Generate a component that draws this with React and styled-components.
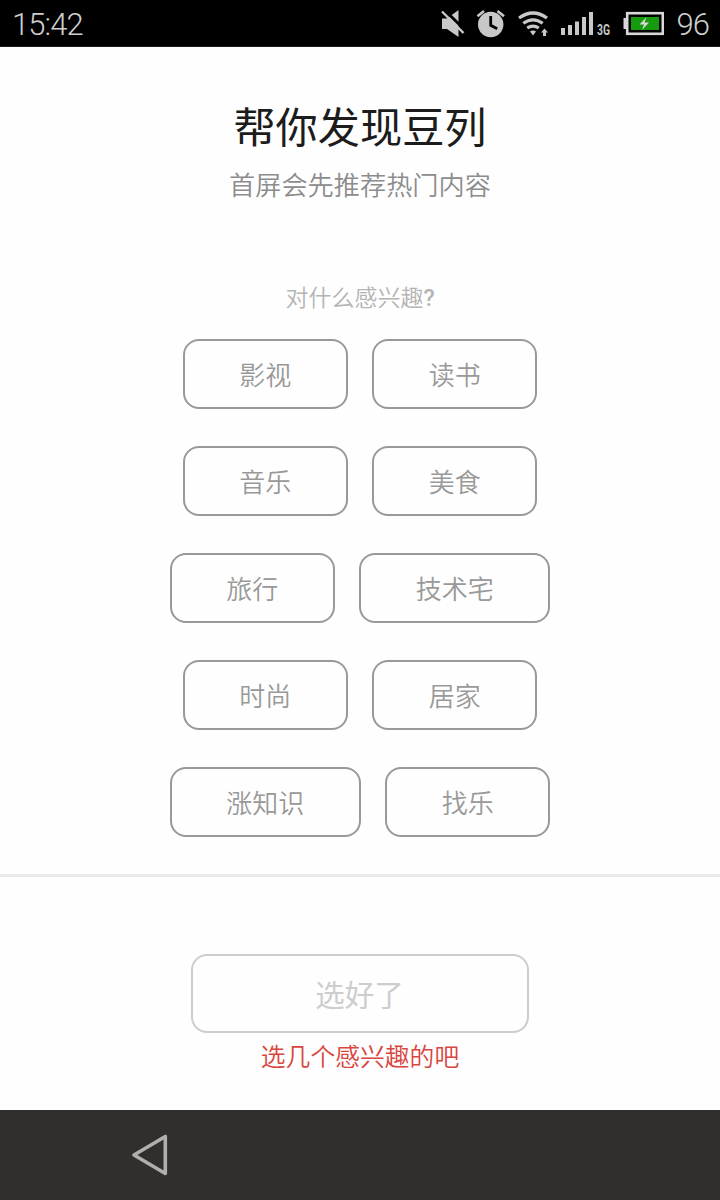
import React, { useState } from "react";
import styled, { createGlobalStyle } from "styled-components";

const GlobalStyle = createGlobalStyle`
  * {
    box-sizing: border-box;
  }

  body {
    margin: 0;
    background-color: #fefefe;
    font-family: Roboto, "Noto Sans CJK SC", sans-serif;
  }
`;

const Screen = styled.div`
  width: 720px;
  height: 1200px;
  display: flex;
  flex-direction: column;
  overflow: hidden;
`;

const StatusBar = styled.header`
  height: 47px;
  flex: none;
  display: flex;
  align-items: center;
  justify-content: space-between;
  padding: 4px 11px 0 12px;
  background-color: #000;
  border-bottom: 1px solid #1c1c1c;
`;

const StatusText = styled.span`
  font-weight: 300;
  font-size: 31px;
  line-height: 42px;
  letter-spacing: ${props => props.$spacing || 0}px;
  color: #cfcfcf;
`;

const StatusRight = styled.div`
  display: flex;
  align-items: center;
`;

const StatusIcons = styled.svg`
  display: block;
  margin: -4px 13px 0 0;
`;

const Main = styled.main`
  height: 827px;
  flex: none;
  display: flex;
  flex-direction: column;
  align-items: center;
  padding-top: 48px;
`;

const Title = styled.h1`
  margin: 0;
  font-family: "Noto Sans CJK SC", sans-serif;
  font-size: 42.2px;
  font-weight: 400;
  line-height: 60px;
  color: #1c1c1c;
`;

const Subtitle = styled.p`
  margin: 10px 0 0;
  font-family: "Noto Sans CJK SC", sans-serif;
  font-size: 26.2px;
  font-weight: 350;
  line-height: 38px;
  color: #8c8c8c;
`;

const Question = styled.p`
  display: flex;
  align-items: baseline;
  height: 34px;
  margin: 76px 0 26px;
  font-size: 23px;
  font-weight: 350;
  line-height: 34px;
  color: #b4b4b4;
`;

const QuestionChars = styled.span`
  font-family: "Noto Sans CJK SC", sans-serif;
`;

const QuestionMark = styled.span`
  font-weight: 500;
`;

const TagList = styled.div`
  display: flex;
  flex-direction: column;
  align-items: center;
  gap: 37px;
`;

const TagRow = styled.div`
  display: flex;
  gap: 24.5px;
`;

const Tag = styled.button`
  height: 70px;
  padding: 0 54.5px 1px;
  border: 2px solid ${props => (props.$selected ? "#42bd56" : "#999")};
  border-radius: 16px;
  background: none;
  font-family: "Noto Sans CJK SC", sans-serif;
  font-size: 26px;
  font-weight: 350;
  color: ${props => (props.$selected ? "#42bd56" : "#999")};
`;

const Footer = styled.footer`
  height: 236px;
  flex: none;
  display: flex;
  flex-direction: column;
  align-items: center;
  padding-top: 77px;
  border-top: 3px solid #e9e9e9;
`;

const SubmitButton = styled.button`
  width: 338px;
  height: 79px;
  padding: 0 1px 2px 0;
  border: 2px solid #cdcdcd;
  border-radius: 16px;
  background: none;
  font-family: "Noto Sans CJK SC", sans-serif;
  font-size: 29.5px;
  font-weight: 400;
  color: #cdcdcd;
`;

const Hint = styled.p`
  margin: 4px 0 0;
  font-family: "Noto Sans CJK SC", sans-serif;
  font-size: 24.8px;
  font-weight: 350;
  line-height: 36px;
  color: #d9453f;
`;

const NavBar = styled.nav`
  height: 90px;
  flex: none;
  display: flex;
  align-items: center;
  padding-left: 130px;
  background-color: #322e2d;
`;

const BackButton = styled.button`
  padding: 0;
  border: 0;
  background: none;
`;

const BackIcon = styled.svg`
  display: block;
`;

const rows = [
  ["影视", "读书"],
  ["音乐", "美食"],
  ["旅行", "技术宅"],
  ["时尚", "居家"],
  ["涨知识", "找乐"]
];

const App = () => {
  const [selected, setSelected] = useState([]);

  const toggle = tag => {
    setSelected(
      selected.includes(tag)
        ? selected.filter(item => item !== tag)
        : [...selected, tag]
    );
  };

  return (
    <Screen>
      <GlobalStyle />
      <StatusBar>
        <StatusText $spacing={-0.9}>15:42</StatusText>
        <StatusRight>
          <StatusIcons width="224" height="46" viewBox="440 0 224 46">
            {/* muted speaker */}
            <path d="M442 18.5h5l11.5-8.5v27l-11.5-8h-5z" fill="#c8c8c8" />
            <path d="M444 9.5L466 31" stroke="#000" strokeWidth="3" />
            <path d="M442 11.5L463.5 33" stroke="#c8c8c8" strokeWidth="2.4" />
            {/* alarm */}
            <circle cx="490.7" cy="24.5" r="12.7" fill="#c8c8c8" />
            <path
              d="M477.5 16.3l6.5-5.3M504 16.3l-6.5-5.3"
              stroke="#c8c8c8"
              strokeWidth="2.6"
            />
            <path
              d="M490.7 16v9.3l6.5 3.4"
              fill="none"
              stroke="#000"
              strokeWidth="2.8"
            />
            {/* wifi */}
            <g fill="none" stroke="#c8c8c8" strokeWidth="3.2">
              <path d="M519 18q14-10 28 0" />
              <path d="M523.3 23.3q9.7-7 19.4 0" />
              <path d="M527.2 28q5.8-3.8 11.6 0" />
            </g>
            <path d="M530 31.5q3-2 6 0l-3 4z" fill="#c8c8c8" />
            <path d="M544.5 28.5l3.5 4h-2v3.5h-3v-3.5h-2z" fill="#c8c8c8" />
            {/* signal */}
            <g fill="#c8c8c8">
              <rect x="561" y="28" width="4" height="7" />
              <rect x="568" y="25" width="4" height="10" />
              <rect x="575" y="21.5" width="4" height="13.5" />
              <rect x="582" y="17" width="4" height="18" />
              <rect x="589" y="12" width="4" height="23" />
            </g>
            <text
              x="597"
              y="35"
              textLength="13"
              lengthAdjust="spacingAndGlyphs"
              fill="#c8c8c8"
              fontFamily="Roboto, sans-serif"
              fontSize="14"
              fontWeight="700"
            >
              3G
            </text>
            {/* battery */}
            <rect x="623.5" y="18" width="3" height="11" fill="#d8d8d8" />
            <rect
              x="627.2"
              y="13.2"
              width="35.6"
              height="20.6"
              fill="#000"
              stroke="#d8d8d8"
              strokeWidth="2.6"
            />
            <rect x="631" y="17" width="28" height="13" fill="#169b0c" />
            <path
              d="M646.5 17l-7 7.5h4.5l-2 5.5 7-7.5h-4.5z"
              fill="#d8d8d8"
            />
          </StatusIcons>
          <StatusText $spacing={-1}>96</StatusText>
        </StatusRight>
      </StatusBar>

      <Main>
        <Title>帮你发现豆列</Title>
        <Subtitle>首屏会先推荐热门内容</Subtitle>
        <Question>
          <QuestionChars>对什么感兴趣</QuestionChars>
          <QuestionMark>?</QuestionMark>
        </Question>
        <TagList>
          {rows.map((row, idx) => (
            <TagRow key={`row-${idx}`}>
              {row.map(tag => (
                <Tag
                  key={tag}
                  $selected={selected.includes(tag)}
                  onClick={() => toggle(tag)}
                >
                  {tag}
                </Tag>
              ))}
            </TagRow>
          ))}
        </TagList>
      </Main>

      <Footer>
        <SubmitButton>选好了</SubmitButton>
        <Hint>选几个感兴趣的吧</Hint>
      </Footer>

      <NavBar>
        <BackButton aria-label="返回">
          <BackIcon width="40" height="44" viewBox="0 0 40 44">
            <path
              d="M35.3 3.5v37L4 22z"
              fill="none"
              stroke="#b0afae"
              strokeWidth="3.6"
              strokeLinejoin="round"
            />
          </BackIcon>
        </BackButton>
      </NavBar>
    </Screen>
  );
};

export default App;
